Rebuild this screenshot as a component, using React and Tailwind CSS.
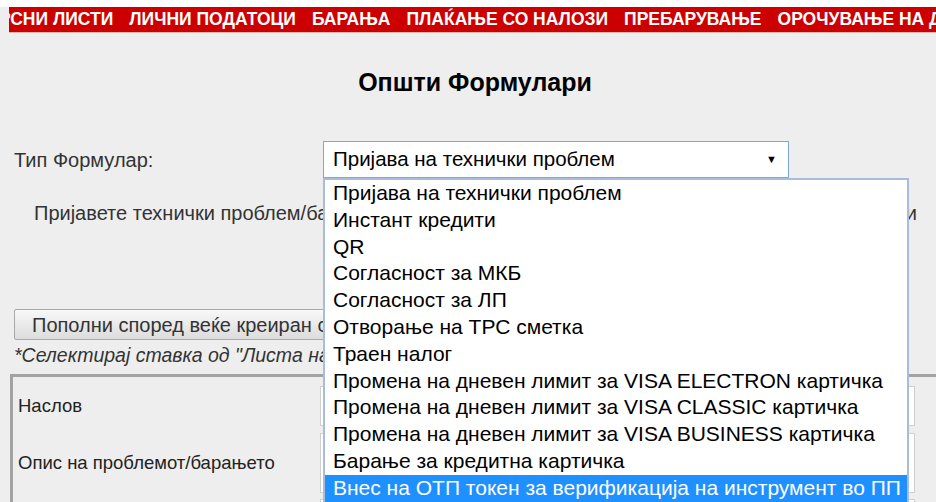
import React from 'react';

const navItems = ['РСНИ ЛИСТИ', 'ЛИЧНИ ПОДАТОЦИ', 'БАРАЊА', 'ПЛАЌАЊЕ СО НАЛОЗИ', 'ПРЕБАРУВАЊЕ', 'ОРОЧУВАЊЕ НА ДЕПОЗИТ'];

const formTypes = [
    'Пријава на технички проблем',
    'Инстант кредити',
    'QR',
    'Согласност за МКБ',
    'Согласност за ЛП',
    'Отворање на ТРС сметка',
    'Траен налог',
    'Промена на дневен лимит за VISA ELECTRON картичка',
    'Промена на дневен лимит за VISA CLASSIC картичка',
    'Промена на дневен лимит за VISA BUSINESS картичка',
    'Барање за кредитна картичка',
    'Внес на ОТП токен за верификација на инструмент во ПП',
];

function App() {
    const selected = formTypes[0];
    const hovered = formTypes.length - 1;

    return (
        <div className="w-[936px] h-[502px] overflow-hidden bg-[#eeeeee] font-['Liberation_Sans',Arial,sans-serif] text-[#222]">
            <div className="h-[7px] bg-white" />

            {/* Main menu, scrolled a little to the right */}
            <nav className="ml-[9px] h-[26px] bg-[#cc0000] overflow-hidden border-b border-[#e6b3b3]">
                <div className="-ml-[10px] flex items-center h-full gap-[16px] whitespace-nowrap text-white font-bold text-[17.5px]">
                    {navItems.map((item) => (
                        <span key={item}>{item}</span>
                    ))}
                </div>
            </nav>

            <h2 className="mt-[34px] pl-[14px] text-center text-[25px] leading-[30px] font-bold text-black">Општи Формулари</h2>

            {/* Form type picker */}
            <div className="mt-[44px] flex items-center">
                <label className="w-[323px] pl-[14px] text-[20px] text-[#333]">Тип Формулар:</label>
                <div className="relative">
                    <div className="w-[466px] h-[37px] bg-white border border-[#7ea7dc] flex items-center justify-between pl-[9px] pr-[11px] text-[20.5px] text-black">
                        <span>{selected}</span>
                        <span className="text-[11px]">▼</span>
                    </div>
                    <ul className="absolute left-0 top-full z-10 w-[586px] bg-white border-2 border-[#a8bcdc] text-[21px] text-black">
                        {formTypes.map((t, i) => (
                            <li
                                key={t}
                                className={`h-[26.8px] leading-[26.8px] pl-[8px] whitespace-nowrap ${i === hovered ? 'bg-[#1e90ff] text-white' : ''}`}
                            >
                                {t}
                            </li>
                        ))}
                    </ul>
                </div>
            </div>

            <p className="mt-[23px] pl-[34px] pr-[19px] flex justify-between text-[20px] leading-[24px] text-[#333] whitespace-nowrap">
                <span>Пријавете технички проблем/барање преку оваа форма</span>
                <span>ги</span>
            </p>

            <button className="mt-[84px] ml-[14px] h-[31px] px-[17px] text-[20px] text-[#333] border border-[#a9a9a9] rounded-[2px] bg-gradient-to-b from-[#f8f8f8] to-[#dcdcdc] whitespace-nowrap">
                Пополни според веќе креиран случај
            </button>
            <p className="mt-[5px] pl-[14px] text-[19.5px] leading-[20px] italic text-[#333] whitespace-nowrap">*Селектирај ставка од "Листа на креирани барања"</p>

            {/* Request details */}
            <div className="mt-[9px] ml-[10px] w-[960px] border-t-[3px] border-l-[3px] border-[#a3a3a3] pt-[9px] pl-[5px]">
                <div className="flex items-center">
                    <span className="w-[302px] text-[18.5px] text-[#222]">Наслов</span>
                    <div className="w-[595px] h-[40px] bg-white border border-[#cfcfcf]" />
                </div>
                <div className="mt-[7px] flex items-center">
                    <span className="w-[302px] text-[18.5px] text-[#222]">Опис на проблемот/барањето</span>
                    <div className="w-[595px] h-[60px] bg-white border border-[#cfcfcf]" />
                </div>
                <div className="mt-[6px] flex">
                    <span className="w-[302px]" />
                    <div className="w-[595px] h-[40px] bg-white border border-[#cfcfcf]" />
                </div>
            </div>
        </div>
    );
}

export default App;
